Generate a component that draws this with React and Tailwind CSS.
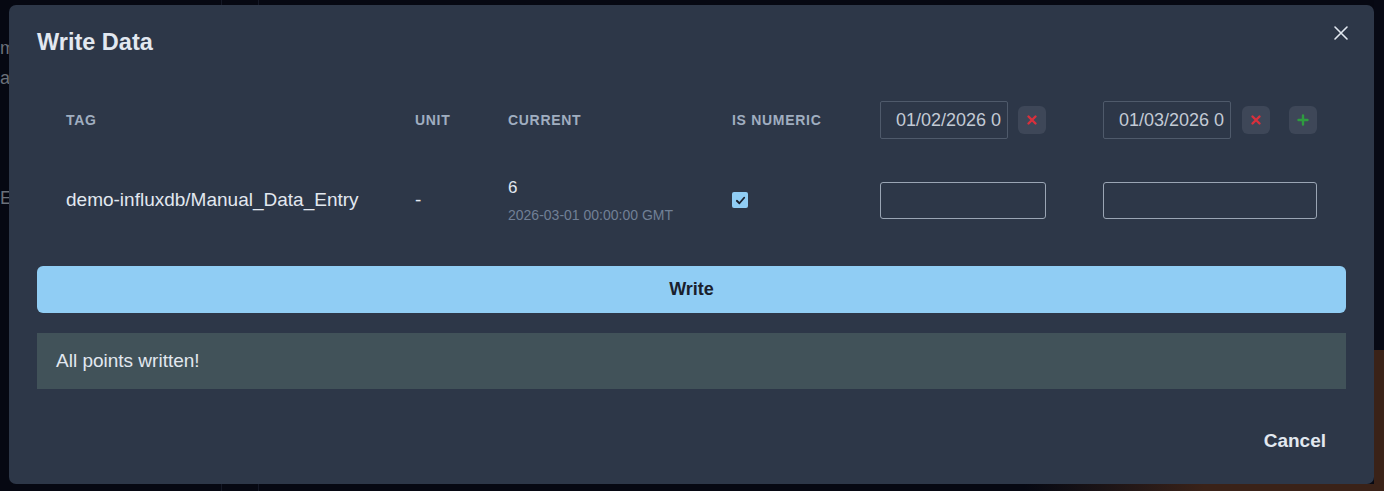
import React from "react";

const font = { fontFamily: '"Liberation Sans", Arial, Helvetica, sans-serif' };

function XMark({ className }) {
  return (
    <svg viewBox="0 0 12 12" className={className} fill="none" stroke="currentColor" strokeWidth="2.4" strokeLinecap="round">
      <path d="M2.5 2.5 L9.5 9.5 M9.5 2.5 L2.5 9.5" />
    </svg>
  );
}

function PlusMark({ className }) {
  return (
    <svg viewBox="0 0 12 12" className={className} fill="none" stroke="currentColor" strokeWidth="2.4" strokeLinecap="round">
      <path d="M6 1.5 V10.5 M1.5 6 H10.5" />
    </svg>
  );
}

function IconButton({ children }) {
  return (
    <button className="flex h-[28px] w-[28px] shrink-0 items-center justify-center rounded-[6px] bg-[#3e4758]">
      {children}
    </button>
  );
}

function DateInput({ value }) {
  return (
    <input
      readOnly
      value={value}
      className="h-[38px] w-[128px] shrink-0 rounded-[2px] border border-[#4f5a6b] bg-transparent pl-[15px] pr-[6px] text-[18px] text-[#c3cad5] outline-none"
      style={font}
    />
  );
}

export default function App() {
  return (
    <div className="relative h-[491px] w-[1384px] overflow-hidden bg-[#060812]" style={font}>
      {/* dimmed page behind the dialog */}
      <div className="flex h-full w-full">
        <div className="flex w-[222px] flex-col border-r border-[#141826] pt-[36px] text-[18px] leading-[24px] text-[#6b7079]">
          <span>m</span>
          <span className="mt-[6px]">ag</span>
          <span className="mt-[96px]">E</span>
        </div>
        <div className="ml-[36px] flex-1 border-l border-[#141826]" />
        <div className="flex w-[10px] flex-col">
          <div className="h-[350px] bg-[#070914]" />
          <div className="flex-1 bg-[#3a2218]" />
        </div>
      </div>
      <div className="pointer-events-none absolute bottom-0 right-0 h-[7px] w-[360px] bg-gradient-to-r from-[#060812] via-[#3a2218] to-[#3a2218]" />

      {/* dialog */}
      <div className="absolute left-[9px] top-[5px] flex h-[479px] w-[1365px] flex-col rounded-[7px] bg-[#2d3748] px-[28px] pt-[23px] pb-[20px] text-[#e2e8f0]">
        <button className="absolute right-[24px] top-[19px] flex h-[18px] w-[18px] items-center justify-center text-[#e2e8f0]">
          <svg viewBox="0 0 16 16" className="h-[16px] w-[16px]" fill="none" stroke="currentColor" strokeWidth="1.6" strokeLinecap="round">
            <path d="M2 2 L14 14 M14 2 L2 14" />
          </svg>
        </button>

        <h2 className="h-[28px] text-[23.5px] font-bold leading-[28px] text-[#e2e8f0]">Write Data</h2>

        {/* table */}
        <div className="mt-[28px] grid grid-cols-[349px_93px_224px_148px_223px_272px]">
          {["TAG", "UNIT", "CURRENT", "IS NUMERIC"].map((h) => (
            <div key={h} className="flex h-[72px] items-center px-[29px] text-[14px] font-bold tracking-wider text-[#a0aec0]">
              {h}
            </div>
          ))}
          <div className="flex h-[72px] items-center gap-[10px] pl-[29px]">
            <DateInput value="01/02/2026 00:00" />
            <IconButton>
              <XMark className="h-[12px] w-[12px] text-[#d9303c]" />
            </IconButton>
          </div>
          <div className="flex h-[72px] items-center pl-[29px]">
            <DateInput value="01/03/2026 00:00" />
            <div className="ml-[11px]">
              <IconButton>
                <XMark className="h-[12px] w-[12px] text-[#d9303c]" />
              </IconButton>
            </div>
            <div className="ml-[19px]">
              <IconButton>
                <PlusMark className="h-[12px] w-[12px] text-[#2e9c3f]" />
              </IconButton>
            </div>
          </div>

          <div className="flex h-[88px] items-center whitespace-nowrap px-[29px] text-[19px] text-[#e2e8f0]">
            demo-influxdb/Manual_Data_Entry
          </div>
          <div className="flex h-[88px] items-center px-[29px] text-[19px] text-[#e2e8f0]">-</div>
          <div className="flex h-[88px] flex-col justify-center px-[29px]">
            <span className="text-[17px] leading-[22px] text-[#e2e8f0]">6</span>
            <span className="mt-[7px] whitespace-nowrap text-[14px] leading-[18px] text-[#718096]">2026-03-01 00:00:00 GMT</span>
          </div>
          <div className="flex h-[88px] items-center px-[29px]">
            <span className="flex h-[16px] w-[16px] items-center justify-center rounded-[2px] bg-[#90cdf4]">
              <svg viewBox="0 0 12 12" className="h-[11px] w-[11px]" fill="none" stroke="#1a202c" strokeWidth="2" strokeLinecap="round" strokeLinejoin="round">
                <path d="M2 6.3 L4.8 9 L10 3" />
              </svg>
            </span>
          </div>
          <div className="flex h-[88px] items-center pl-[29px]">
            <input readOnly className="h-[37px] w-[166px] rounded-[3px] border border-[#9aa5b4] bg-transparent outline-none" />
          </div>
          <div className="flex h-[88px] items-center pl-[29px]">
            <input readOnly className="h-[37px] w-[214px] rounded-[3px] border border-[#9aa5b4] bg-transparent outline-none" />
          </div>
        </div>

        <button className="mt-[22px] flex h-[47px] w-full items-center justify-center rounded-[6px] bg-[#90cdf4] text-[18px] font-bold text-[#1a202c]">
          Write
        </button>

        <div className="mt-[20px] flex h-[56px] items-center bg-[#415259] pl-[19px] text-[19px] text-[#e2e8f0]">
          All points written!
        </div>

        <div className="mt-auto flex justify-end">
          <button className="flex h-[46px] items-center rounded-[6px] px-[20px] text-[19px] font-bold text-[#e2e8f0]">
            Cancel
          </button>
        </div>
      </div>
    </div>
  );
}
